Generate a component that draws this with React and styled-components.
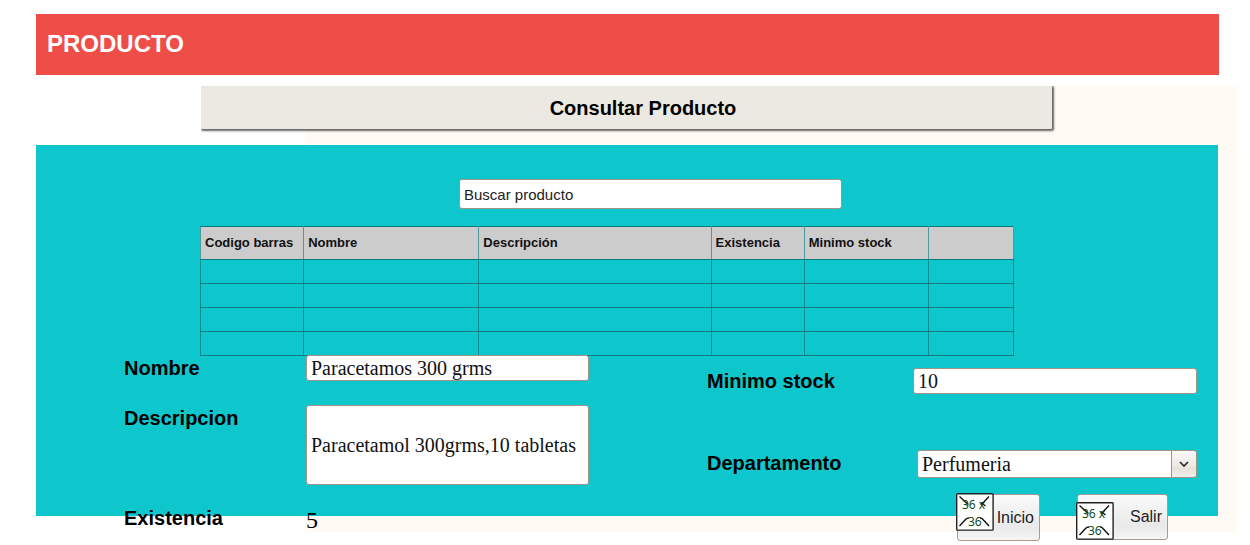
import React from "react";
import styled, { createGlobalStyle } from "styled-components";

const GlobalStyle = createGlobalStyle`
  *, *::before, *::after { box-sizing: border-box; }
  body {
    margin: 0;
    background: #fff;
    color: #000;
    font-family: "Liberation Sans", Arial, sans-serif;
  }
`;

const serif = '"Liberation Serif", "Times New Roman", serif';

const Page = styled.main`
  padding: 14px 13px 13px 36px;
`;

const Banner = styled.header`
  margin-right: 18px;
  padding: 16px 11px 17px;
  background: #ef4d48;
`;

const BannerTitle = styled.h1`
  margin: 0;
  color: #fff;
  font-size: 24px;
  line-height: 28px;
`;

const Stage = styled.div`
  display: grid;
  margin-top: 11px;
`;

const Backdrop = styled.div`
  grid-area: 1 / 1;
  margin: 0 0 0 269px;
  background: #fffaf3;
`;

const Content = styled.div`
  grid-area: 1 / 1;
  margin: 0 19px 16px 0;
`;

const SectionTitle = styled.h2`
  margin: 0 166px 16px 165px;
  padding: 11px 10px 9px 43px;
  background: #ece9e2;
  border-radius: 1px;
  box-shadow: 1px 1px 2px 1px rgba(0, 0, 0, 0.6);
  clip-path: inset(0 -4px -4px 0);
  font-size: 20px;
  line-height: 23px;
  text-align: center;
`;

const Panel = styled.section`
  display: flow-root;
  padding: 34px 21px 0 88px;
  background: #0ec7cd;
`;

const Field = styled.input`
  display: block;
  width: 100%;
  min-width: 0;
  height: ${(p) => p.$height || 26}px;
  padding: 0 5px 0 4px;
  border: 1px solid #a09485;
  border-radius: 3px;
  outline: none;
  background: #fff;
  color: #111;
  font-family: ${serif};
  font-size: 20px;
`;

const SearchRow = styled.div`
  margin: 0 355px 17px 335px;
`;

const SearchField = styled(Field)`
  font-family: "Liberation Sans", Arial, sans-serif;
  font-size: 15px;
  &::placeholder {
    color: #222;
    opacity: 1;
  }
`;

const TableArea = styled.div`
  margin: 0 183px -1px 76px;
`;

const Table = styled.table`
  width: 100%;
  table-layout: fixed;
  border-collapse: collapse;
`;

const HeadCell = styled.th`
  height: 33px;
  padding: 0 4px;
  border: solid;
  border-width: 1px;
  border-color: #0b7a7e #4f989c;
  background: #ccc;
  color: #111;
  font-size: 13px;
  line-height: 16px;
  text-align: left;
  white-space: nowrap;
`;

const Cell = styled.td`
  height: 24px;
  padding: 0;
  border: solid;
  border-width: 1px;
  border-color: #0b7a7e #0b8a8f;
`;

const Form = styled.form`
  display: grid;
  grid-template-columns: 465fr 490fr;
  column-gap: 118px;
  margin-bottom: -25px;
`;

const Details = styled.div`
  display: grid;
  grid-template-columns: 182px 1fr;
  grid-template-rows: 50px 100px auto;
  align-items: start;
`;

const Stock = styled.div`
  display: grid;
  grid-template-columns: 206px 1fr;
  grid-template-rows: 82px 44px auto;
  align-items: start;
  padding-top: 13px;
`;

const Label = styled.label`
  padding-top: 1px;
  font-size: 20px;
  font-weight: bold;
  line-height: 24px;
`;

const Amount = styled.output`
  font-family: ${serif};
  font-size: 24px;
  line-height: 30px;
`;

const SelectBox = styled.div`
  display: grid;
  grid-template-columns: 1fr 26px;
  margin-left: 4px;
`;

const Select = styled.select`
  grid-area: 1 / 1 / 2 / 3;
  width: 100%;
  height: 28px;
  padding: 0 4px;
  appearance: none;
  border: 1px solid #a09485;
  border-radius: 3px;
  outline: none;
  background: #fff;
  color: #111;
  font-family: ${serif};
  font-size: 20px;
`;

const Arrow = styled.span`
  grid-area: 1 / 2;
  z-index: 1;
  display: flex;
  align-items: center;
  justify-content: center;
  border: 1px solid #a09485;
  border-radius: 0 3px 3px 0;
  background: linear-gradient(#fcfbfa, #e6e3da 70%, #f1efea);
  pointer-events: none;
`;

const Actions = styled.div`
  grid-column: 1 / 3;
  display: flex;
  justify-content: flex-end;
  align-items: flex-start;
  gap: 37px;
  padding-right: 29px;
`;

const ActionButton = styled.button`
  display: flex;
  align-items: ${(p) => (p.$iconLow ? "flex-end" : "flex-start")};
  justify-content: space-between;
  width: ${(p) => p.$width}px;
  height: ${(p) => (p.$iconLow ? 46 : 47)}px;
  padding: 0 5px 0 0;
  border: 1px solid #a79a90;
  border-radius: 3px;
  background: linear-gradient(#fafafa, #e9e9e9 70%, #f5f5f5);
  color: #222;
  font-family: inherit;
  font-size: 16px;
  line-height: 18px;

  svg {
    flex: none;
    margin: ${(p) => (p.$iconLow ? "0 0 -1px -2px" : "-2px 0 0 -2px")};
  }
  span {
    align-self: center;
  }
`;

function PlaceholderIcon() {
  return (
    <svg width="38" height="38" viewBox="0 0 38 38" aria-hidden="true">
      <rect x="0.7" y="0.7" width="36.4" height="36.4" rx="0.8" fill="#fff" stroke="#222" strokeWidth="1.4" />
      <path
        d="M3.5 3.5 L9.5 9 Q11.5 11 12.5 11.5 M33 3.5 L25 12 M25 9.5 L29.5 13 M3.5 33 L9.5 26.5 Q11 25 13 25 M33 33 L27 26.5 Q26 25 24 25"
        fill="none"
        stroke="#111"
        strokeWidth="1.4"
      />
      <g fill="#154a15" fontFamily="'Noto Sans', sans-serif" fontSize="12">
        <text x="6" y="16">36 x</text>
        <text x="12" y="33">36</text>
      </g>
    </svg>
  );
}

const columns = [
  { title: "Codigo barras", width: 103 },
  { title: "Nombre", width: 175 },
  { title: "Descripción", width: 232 },
  { title: "Existencia", width: 93 },
  { title: "Minimo stock", width: 124 },
  { title: "", width: 85 },
];

export default function App() {
  return (
    <>
      <GlobalStyle />
      <Page>
        <Banner>
          <BannerTitle>PRODUCTO</BannerTitle>
        </Banner>
        <Stage>
          <Backdrop />
          <Content>
            <SectionTitle>Consultar Producto</SectionTitle>
            <Panel>
              <SearchRow>
                <SearchField $height={30} type="text" placeholder="Buscar producto" aria-label="Buscar producto" />
              </SearchRow>
              <TableArea>
                <Table>
                  <colgroup>
                    {columns.map((c, i) => (
                      <col key={i} width={c.width} />
                    ))}
                  </colgroup>
                  <thead>
                    <tr>
                      {columns.map((c, i) => (
                        <HeadCell key={i} scope="col">{c.title}</HeadCell>
                      ))}
                    </tr>
                  </thead>
                  <tbody>
                    {[0, 1, 2, 3].map((row) => (
                      <tr key={row}>
                        {columns.map((c, i) => (
                          <Cell key={i} />
                        ))}
                      </tr>
                    ))}
                  </tbody>
                </Table>
              </TableArea>
              <Form onSubmit={(e) => e.preventDefault()}>
                <Details>
                  <Label htmlFor="nombre">Nombre</Label>
                  <Field id="nombre" defaultValue="Paracetamos 300 grms" />
                  <Label htmlFor="descripcion">Descripcion</Label>
                  <Field id="descripcion" $height={80} defaultValue="Paracetamol 300grms,10 tabletas" />
                  <Label htmlFor="existencia">Existencia</Label>
                  <Amount id="existencia">5</Amount>
                </Details>
                <Stock>
                  <Label htmlFor="minimo">Minimo stock</Label>
                  <Field id="minimo" defaultValue="10" />
                  <Label htmlFor="departamento">Departamento</Label>
                  <SelectBox>
                    <Select id="departamento" defaultValue="Perfumeria">
                      <option>Perfumeria</option>
                    </Select>
                    <Arrow>
                      <svg width="10" height="6" viewBox="0 0 10 6" aria-hidden="true">
                        <path d="M1 1 L5 5 L9 1" fill="none" stroke="#222" strokeWidth="1.6" />
                      </svg>
                    </Arrow>
                  </SelectBox>
                  <Actions>
                    <ActionButton type="button" $width={83}>
                      <PlaceholderIcon />
                      <span>Inicio</span>
                    </ActionButton>
                    <ActionButton type="button" $width={91} $iconLow>
                      <PlaceholderIcon />
                      <span>Salir</span>
                    </ActionButton>
                  </Actions>
                </Stock>
              </Form>
            </Panel>
          </Content>
        </Stage>
      </Page>
    </>
  );
}
